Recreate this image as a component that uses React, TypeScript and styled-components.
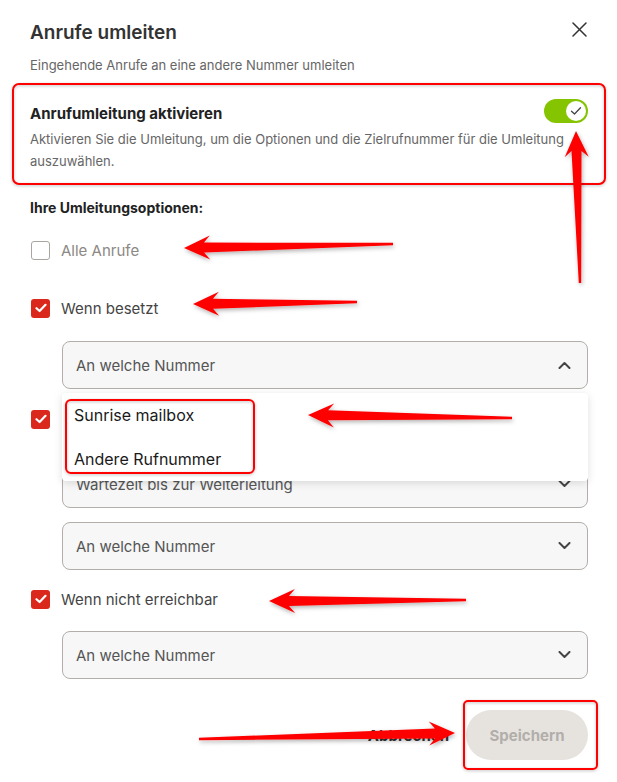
import React from 'react';
import styled, { createGlobalStyle } from 'styled-components';

const GlobalStyle = createGlobalStyle`
  html, body { margin: 0; padding: 0; background: #fff; }
  body { font-family: Inter, "Noto Sans", Arial, sans-serif; }
  * { box-sizing: border-box; }
`;

const Page = styled.div`
  position: relative;
  width: 617px;
  height: 782px;
  overflow: hidden;
  background: #fff;
`;

const Modal = styled.div`
  display: flex;
  flex-direction: column;
  padding: 21px 29px 0 30px;
`;

const Header = styled.div`
  display: flex;
  align-items: center;
  justify-content: space-between;
  height: 24px;
`;

const Title = styled.h2`
  margin: 0;
  font-size: 19px;
  line-height: 24px;
  font-weight: 600;
  color: #333;
`;

const CloseButton = styled.button`
  display: flex;
  align-items: center;
  justify-content: center;
  width: 24px;
  height: 24px;
  margin: -8px -3px 0 0;
  padding: 0;
  border: 0;
  background: none;
  color: #333;
`;

const Subtitle = styled.p`
  margin: 10px 0 0;
  font-size: 13px;
  line-height: 20px;
  color: #666;
`;

const ToggleSection = styled.section`
  margin-top: 25px;
`;

const ToggleRow = styled.div`
  display: flex;
  align-items: center;
  justify-content: space-between;
  height: 24px;
`;

const ToggleLabel = styled.span`
  font-size: 15px;
  font-weight: 700;
  color: #222;
  padding-top: 3px;
`;

const Switch = styled.div`
  display: flex;
  align-items: center;
  justify-content: flex-end;
  width: 44px;
  height: 24px;
  padding: 2px;
  margin-top: -2px;
  border-radius: 12px;
  background: #84c400;
`;

const Knob = styled.div`
  display: flex;
  align-items: center;
  justify-content: center;
  width: 20px;
  height: 20px;
  border-radius: 50%;
  background: #fff;
`;

const Description = styled.p`
  margin: 4px 0 0;
  font-size: 13px;
  line-height: 22px;
  color: #666;
`;

const SectionHeading = styled.h3`
  margin: 26px 0 0;
  font-size: 14px;
  line-height: 20px;
  font-weight: 700;
  color: #222;
`;

const OptionRow = styled.label<{ $mt: number }>`
  display: flex;
  align-items: center;
  gap: 11px;
  height: 24px;
  margin-top: ${p => p.$mt}px;
  padding-left: 1px;
`;

const Box = styled.span<{ $checked: boolean }>`
  display: flex;
  align-items: center;
  justify-content: center;
  width: 19px;
  height: 19px;
  border-radius: 3px;
  background: ${p => (p.$checked ? '#da291c' : '#fff')};
  border: ${p => (p.$checked ? '0' : '1.5px solid #aaa5a0')};
`;

const OptionLabel = styled.span<{ $muted?: boolean }>`
  font-size: 15px;
  color: ${p => (p.$muted ? '#8c8884' : '#444')};
`;

const SelectWrap = styled.div<{ $mt: number }>`
  position: relative;
  margin: ${p => p.$mt}px 0 0 32px;
`;

const SelectBox = styled.div`
  display: flex;
  align-items: center;
  justify-content: space-between;
  height: 48px;
  padding: 0 16px 0 13px;
  border: 1.5px solid #b3aea9;
  border-radius: 8px;
  background: #f7f7f7;
  font-size: 15px;
  color: #555;
`;

const Menu = styled.ul`
  position: absolute;
  top: calc(100% + 4px);
  left: 0;
  right: 0;
  z-index: 2;
  margin: 0;
  padding: 0;
  list-style: none;
  background: #fff;
  border-radius: 4px;
  box-shadow: 0 2px 8px rgba(0, 0, 0, 0.13);
`;

const MenuItem = styled.li`
  display: flex;
  align-items: center;
  height: 44px;
  padding-left: 12px;
  font-size: 16px;
  color: #1a1a1a;
`;

const Footer = styled.div`
  display: flex;
  align-items: center;
  justify-content: flex-end;
  gap: 17px;
  margin-top: 31px;
`;

const CancelButton = styled.button`
  padding: 0;
  border: 0;
  background: none;
  font-family: inherit;
  font-size: 15px;
  font-weight: 700;
  color: #333;
`;

const SaveButton = styled.button`
  width: 122px;
  height: 50px;
  border: 0;
  border-radius: 25px;
  background: #e6e3df;
  font-family: inherit;
  font-size: 15px;
  font-weight: 700;
  color: #b2aeaa;
`;

const Overlay = styled.svg`
  position: absolute;
  inset: 0;
  z-index: 5;
  pointer-events: none;
`;

const Chevron = ({ up }: { up?: boolean }) => (
  <svg width="13" height="8" viewBox="0 0 13 8">
    <path
      d={up ? 'M1.5 7 L6.5 2 L11.5 7' : 'M1.5 1 L6.5 6 L11.5 1'}
      fill="none"
      stroke="#444"
      strokeWidth="2"
      strokeLinecap="round"
      strokeLinejoin="round"
    />
  </svg>
);

const Check = () => (
  <svg width="12" height="10" viewBox="0 0 12 10">
    <path d="M1.5 5.2 L4.6 8 L10.5 1.8" fill="none" stroke="#fff" strokeWidth="2.2" strokeLinecap="round" strokeLinejoin="round" />
  </svg>
);

const Option = ({ label, checked, mt, muted }: { label?: string; checked: boolean; mt: number; muted?: boolean }) => (
  <OptionRow $mt={mt}>
    <Box $checked={checked}>{checked && <Check />}</Box>
    {label && <OptionLabel $muted={muted}>{label}</OptionLabel>}
  </OptionRow>
);

type Pt = [number, number];
function arrow(t: Pt, p: Pt, head = 26, headW = 12, neckW = 5, tailW = 1.2) {
  const dx = p[0] - t[0];
  const dy = p[1] - t[1];
  const len = Math.hypot(dx, dy);
  const ux = dx / len;
  const uy = dy / len;
  const nx = -uy;
  const ny = ux;
  const at = (d: number, w: number) => `${(t[0] + ux * d + nx * w).toFixed(1)},${(t[1] + uy * d + ny * w).toFixed(1)}`;
  const barb = len - head;
  const neck = len - head + 6;
  return [at(0, tailW), at(neck, neckW), at(barb, headW), `${p[0]},${p[1]}`, at(barb, -headW), at(neck, -neckW), at(0, -tailW)].join(' ');
}

const arrows: [Pt, Pt][] = [
  [[393, 244], [184, 248]],
  [[357, 302], [193, 304]],
  [[512, 418], [308, 415]],
  [[466, 600], [269, 601]],
  [[199, 739], [455, 733]],
  [[580, 283], [576, 131]],
];

const boxes = [
  { x: 13, y: 84, w: 592, h: 100, r: 6 },
  { x: 66, y: 400, w: 188, h: 73, r: 5 },
  { x: 464, y: 701, w: 133, h: 68, r: 4 },
];

export default function App() {
  return (
    <Page>
      <GlobalStyle />
      <Modal>
        <Header>
          <Title>Anrufe umleiten</Title>
          <CloseButton aria-label="Schliessen">
            <svg width="15" height="15" viewBox="0 0 15 15">
              <path d="M1 1 L14 14 M14 1 L1 14" stroke="#333" strokeWidth="1.5" strokeLinecap="round" />
            </svg>
          </CloseButton>
        </Header>
        <Subtitle>Eingehende Anrufe an eine andere Nummer umleiten</Subtitle>

        <ToggleSection>
          <ToggleRow>
            <ToggleLabel>Anrufumleitung aktivieren</ToggleLabel>
            <Switch>
              <Knob>
                <svg width="12" height="10" viewBox="0 0 12 10">
                  <path d="M1.5 5.2 L4.5 8 L10.5 1.8" fill="none" stroke="#444" strokeWidth="1.3" strokeLinecap="round" strokeLinejoin="round" />
                </svg>
              </Knob>
            </Switch>
          </ToggleRow>
          <Description>
            Aktivieren Sie die Umleitung, um die Optionen und die Zielrufnummer für die Umleitung auszuwählen.
          </Description>
        </ToggleSection>

        <SectionHeading>Ihre Umleitungsoptionen:</SectionHeading>

        <Option label="Alle Anrufe" checked={false} mt={20} muted />
        <Option label="Wenn besetzt" checked mt={34} />
        <SelectWrap $mt={21}>
          <SelectBox>
            An welche Nummer
            <Chevron up />
          </SelectBox>
          <Menu>
            <MenuItem>Sunrise mailbox</MenuItem>
            <MenuItem>Andere Rufnummer</MenuItem>
          </Menu>
        </SelectWrap>

        <Option checked mt={18} />
        <SelectWrap $mt={29}>
          <SelectBox>
            Wartezeit bis zur Weiterleitung
            <Chevron />
          </SelectBox>
        </SelectWrap>
        <SelectWrap $mt={14}>
          <SelectBox>
            An welche Nummer
            <Chevron />
          </SelectBox>
        </SelectWrap>

        <Option label="Wenn nicht erreichbar" checked mt={17} />
        <SelectWrap $mt={20}>
          <SelectBox>
            An welche Nummer
            <Chevron />
          </SelectBox>
        </SelectWrap>

        <Footer>
          <CancelButton>Abbrechen</CancelButton>
          <SaveButton>Speichern</SaveButton>
        </Footer>
      </Modal>

      <Overlay width="617" height="782" viewBox="0 0 617 782">
        <defs>
          <filter id="shadow" x="-20%" y="-50%" width="140%" height="200%">
            <feDropShadow dx="1" dy="2" stdDeviation="2" floodColor="#000" floodOpacity="0.3" />
          </filter>
          <filter id="boxShadow" x="-5%" y="-10%" width="110%" height="120%">
            <feDropShadow dx="0" dy="1" stdDeviation="1.5" floodColor="#000" floodOpacity="0.25" />
          </filter>
        </defs>
        {boxes.map((b, i) => (
          <rect key={i} x={b.x} y={b.y} width={b.w} height={b.h} rx={b.r} fill="none" stroke="#f00" strokeWidth="2" filter="url(#boxShadow)" />
        ))}
        {arrows.map(([t, p], i) => (
          <polygon key={i} points={arrow(t, p)} fill="#f00" filter="url(#shadow)" />
        ))}
      </Overlay>
    </Page>
  );
}
